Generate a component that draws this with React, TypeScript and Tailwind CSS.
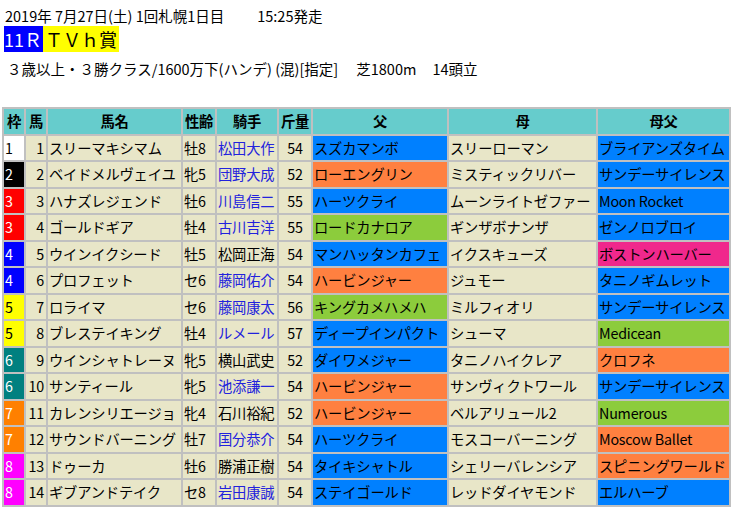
const B="bg-[#0080ff]",O="bg-[#ff8040]",G="bg-[#8ccc3c]",P="bg-[#f0288c]";
const frame:Record<number,string>={1:"bg-white text-black",2:"bg-black text-white",3:"bg-[#ff0000] text-white",4:"bg-[#0000ff] text-white",5:"bg-[#ffff00] text-black",6:"bg-[#008080] text-white",7:"bg-[#ff8000] text-white",8:"bg-[#ff00ff] text-white"};
const rows:[number,number,string,string,string,boolean,number,string,string,string,string,string][]=[
[1,1,"スリーマキシマム","牡8","松田大作",true,54,"スズカマンボ",B,"スリーローマン","ブライアンズタイム",B],
[2,2,"ベイドメルヴェイユ","牝5","団野大成",true,52,"ローエングリン",O,"ミスティックリバー","サンデーサイレンス",B],
[3,3,"ハナズレジェンド","牡6","川島信二",true,55,"ハーツクライ",B,"ムーンライトゼファー","Moon Rocket",B],
[3,4,"ゴールドギア","牡4","古川吉洋",true,55,"ロードカナロア",G,"ギンザボナンザ","ゼンノロブロイ",B],
[4,5,"ウインイクシード","牡5","松岡正海",false,54,"マンハッタンカフェ",B,"イクスキューズ","ボストンハーバー",P],
[4,6,"プロフェット","セ6","藤岡佑介",true,54,"ハービンジャー",O,"ジュモー","タニノギムレット",B],
[5,7,"ロライマ","セ6","藤岡康太",true,56,"キングカメハメハ",G,"ミルフィオリ","サンデーサイレンス",B],
[5,8,"ブレステイキング","牡4","ルメール",true,57,"ディープインパクト",B,"シューマ","Medicean",G],
[6,9,"ウインシャトレーヌ","牝5","横山武史",false,52,"ダイワメジャー",B,"タニノハイクレア","クロフネ",O],
[6,10,"サンティール","牝5","池添謙一",true,54,"ハービンジャー",O,"サンヴィクトワール","サンデーサイレンス",B],
[7,11,"カレンシリエージョ","牝4","石川裕紀",false,52,"ハービンジャー",O,"ベルアリュール2","Numerous",G],
[7,12,"サウンドバーニング","牡7","国分恭介",true,54,"ハーツクライ",B,"モスコーバーニング","Moscow Ballet",O],
[8,13,"ドゥーカ","牡6","勝浦正樹",false,54,"タイキシャトル",B,"シェリーバレンシア","スピニングワールド",O],
[8,14,"ギブアンドテイク","セ8","岩田康誠",true,54,"ステイゴールド",B,"レッドダイヤモンド","エルハーブ",B]];
const td="border-2 border-[#c0c0c0] h-[26.5px] px-[1px] whitespace-nowrap overflow-hidden";
const bg="bg-[#e8e6c8]";
export default function App(){return(
<div className="w-[734px] h-[511px] bg-white text-black text-[15px] leading-[18px] overflow-hidden" style={{fontFamily:'"Noto Sans CJK JP",sans-serif'}}>
<div className="pl-[5px] pt-[7px] h-[26px] text-[14.5px]">2019年 7月27日(土) 1回札幌1日目<span className="ml-[33px]">15:25発走</span></div>
<div className="pl-[4px] flex text-[18px] leading-[26px] h-[26px]"><span className="bg-[#0000ff] text-white pr-[1px]">11Ｒ</span><span className="bg-[#ffff00] px-[2px]">ＴＶｈ賞</span></div>
<div className="pl-[7px] pt-[8px] h-[48px] text-[14.5px]">３歳以上・３勝クラス/1600万下(ハンデ) (混)[指定]<span className="ml-[18px]">芝1800m</span><span className="ml-[16px]">14頭立</span></div>
<table className="ml-[2px] border-collapse table-fixed w-[729px] mt-[7px] text-[14.3px] tracking-[-0.2px]">
<colgroup>{[22,22,135,34,62,34,136,149,133].map((w,i)=><col key={i} style={{width:w}}/>)}</colgroup>
<thead><tr className="bg-[#66cccc] font-bold">{["枠","馬","馬名","性齢","騎手","斤量","父","母","母父"].map(h=><th key={h} className={td+" text-center"}>{h}</th>)}</tr></thead>
<tbody>{rows.map(r=><tr key={r[1]}>
<td className={td+" "+frame[r[0]]}>{r[0]}</td>
<td className={td+" "+bg+" text-right pr-[2px]"}>{r[1]}</td>
<td className={td+" "+bg}>{r[2]}</td>
<td className={td+" "+bg}>{r[3]}</td>
<td className={td+" "+bg+(r[5]?" text-[#2222dd]":"")}>{r[4]}</td>
<td className={td+" "+bg+" text-center"}>{r[6]}</td>
<td className={td+" "+r[8]}>{r[7]}</td>
<td className={td+" "+bg}>{r[9]}</td>
<td className={td+" "+r[11]}>{r[10]}</td>
</tr>)}</tbody></table></div>)}
